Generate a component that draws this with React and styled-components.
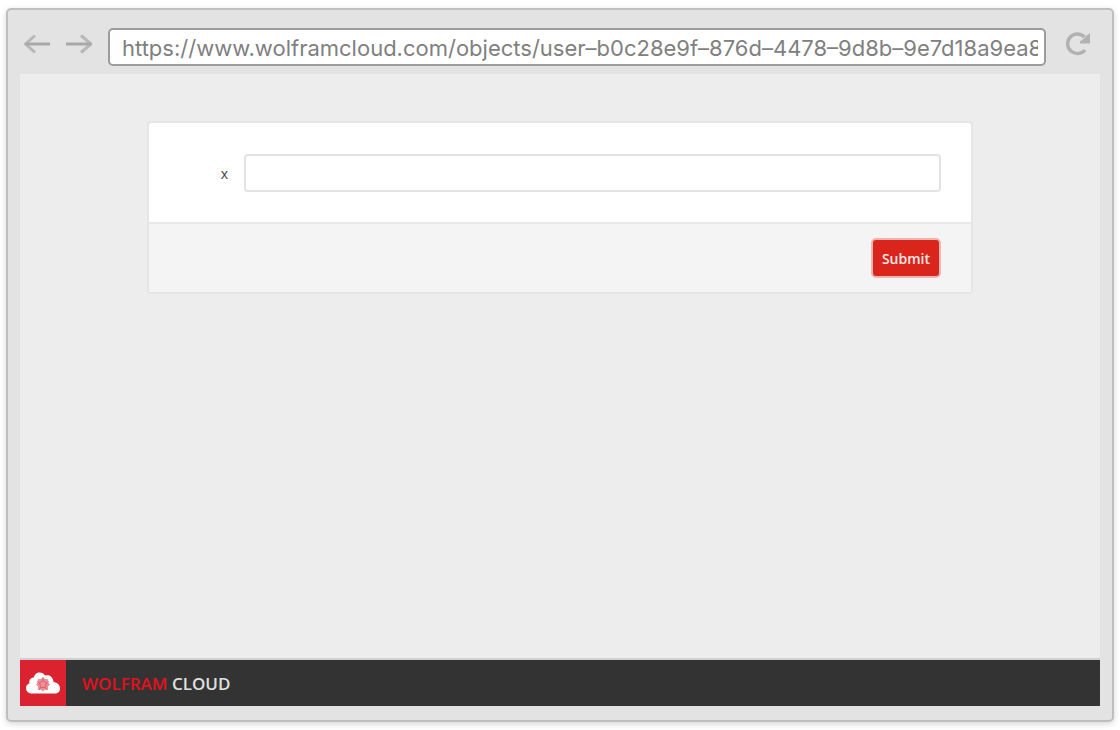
import styled, { createGlobalStyle } from "styled-components"

const address = "https://www.wolframcloud.com/objects/user–b0c28e9f–876d–4478–9d8b–9e7d18a9ea8";

export default function App() {
    return (
        <>
            <GlobalStyle />
            <BrowserWindow>
                <Toolbar>
                    <IconButton type="button" aria-label="Back">
                        <ArrowIcon />
                    </IconButton>
                    <IconButton type="button" aria-label="Forward">
                        <ArrowIcon forward />
                    </IconButton>
                    <AddressInput type="text" aria-label="Address" defaultValue={address} />
                    <IconButton type="button" aria-label="Reload">
                        <ReloadIcon />
                    </IconButton>
                </Toolbar>

                <Page>
                    <Main>
                        <FormCard onSubmit={(e) => e.preventDefault()}>
                            <Field>
                                <FieldLabel htmlFor="x">x</FieldLabel>
                                <FieldInput id="x" type="text" />
                            </Field>
                            <Actions>
                                <SubmitButton type="submit">Submit</SubmitButton>
                            </Actions>
                        </FormCard>
                    </Main>

                    <Footer>
                        <LogoBox>
                            <CloudLogo />
                        </LogoBox>
                        <Brand>
                            <BrandName>WOLFRAM</BrandName> CLOUD
                        </Brand>
                    </Footer>
                </Page>
            </BrowserWindow>
        </>
    )
};

function ArrowIcon({ forward }) {
    return (
        <svg width="28" height="22" viewBox="0 0 28 22" fill="none" strokeWidth="3">
            {forward ? (
                <>
                    <path d="M15 2.500L25 11L15 19.500" stroke="#b8b8b8" strokeLinejoin="round" />
                    <path d="M0 11H25" stroke="#a8a8a8" />
                </>
            ) : (
                <>
                    <path d="M11 2.500L1.500 11L11 19.500" stroke="#b8b8b8" strokeLinejoin="round" />
                    <path d="M1.500 11H26" stroke="#a8a8a8" />
                </>
            )}
        </svg>
    )
}

function ReloadIcon() {
    return (
        <svg width="28" height="28" viewBox="0 0 28 28">
            <path d="M21 20A9.800 9.800 0 1 1 20.500 7" fill="none" stroke="#b2b2b2" strokeWidth="3.4" />
            <path d="M26 3V13.500H16V11.500L20 8.500L22 6Z" fill="#b2b2b2" />
        </svg>
    )
}

function CloudLogo() {
    return (
        <svg width="36" height="24" viewBox="0 0 36 24">
            <path
                d="M7 22.500C3 22.500 1 20 1 17C1 14.500 2.500 12.800 4.500 12.200C3.800 9 5.500 6.500 9 6.500C9.500 3 12 1.500 14.500 1.500C17 1.500 19 2.700 20 4.500C23.500 3.500 28 5 28.500 11C32.500 11.500 35 14 35 17.500C35 20.500 33 22.500 29.500 22.500Z"
                fill="#ffffff"
            />
            <path
                d="M18 6L20 8L23.300 8.200L23 11.300L25 13.500L23 15.500L23.200 18.700L20 18.700L18 20.500L16 18.700L12.800 18.700L13 15.500L11 13.500L13 11.300L12.700 8.200L16 8Z"
                fill="#ea8f97"
            />
            <path
                d="M18 9.500L21.500 12L20.200 16.500H15.800L14.500 12ZM18 9.500V6.500M21.500 12L24 10.500M20.200 16.500L22 19M15.800 16.500L14 19M14.500 12L12 10.500"
                fill="none"
                stroke="#e0606c"
            />
        </svg>
    )
}

const GlobalStyle = createGlobalStyle`
    * {
        box-sizing: border-box;
    }

    body {
        margin: 0;
        background-color: #FFFFFF;
        font-family: "Open Sans", "Noto Sans", sans-serif;
    }
`

const BrowserWindow = styled.div`
    display: flex;
    flex-direction: column;
    min-height: calc(100vh - 16px);
    margin: 8px 6px;
    padding: 0 12px 14px;
    border: 2px solid #BFBFBF;
    border-radius: 5px;
    background-color: #E3E3E3;
    box-shadow: 0 2px 6px rgba(0, 0, 0, 0.16);
`

const Toolbar = styled.header`
    display: flex;
    align-items: flex-start;
    gap: 14px;
    padding: 18px 8px 8px 4px;
`

const IconButton = styled.button`
    display: flex;
    align-items: center;
    justify-content: center;
    height: 32px;
    padding: 0;
    border: none;
    background: none;
    cursor: pointer;
`

const AddressInput = styled.input`
    flex: 1;
    min-width: 0;
    height: 38px;
    margin-right: 4px;
    padding: 2px 6px 0 12px;
    border: 2px solid #9C9C9C;
    border-radius: 5px;
    background-color: #FFFFFF;
    color: #808080;
    font-family: Inter, Roboto, sans-serif;
    font-size: 22px;
`

const Page = styled.div`
    flex: 1;
    display: flex;
    flex-direction: column;
    background-color: #EDEDED;
`

const Main = styled.main`
    flex: 1;
    padding: 47px 127px;
`

const FormCard = styled.form`
    border: 2px solid #E5E5E5;
    border-radius: 4px;
    background-color: #FFFFFF;
`

const Field = styled.div`
    display: flex;
    align-items: center;
    gap: 16px;
    padding: 31px 30px 30px;
`

const FieldLabel = styled.label`
    width: 49px;
    color: #444444;
    font-size: 14px;
    font-weight: 500;
    text-align: right;
`

const FieldInput = styled.input`
    flex: 1;
    min-width: 0;
    height: 38px;
    padding: 0 10px;
    border: 2px solid #E3E3E3;
    border-radius: 4px;
    font-size: 14px;
`

const Actions = styled.div`
    display: flex;
    justify-content: flex-end;
    padding: 14px 30px;
    border-top: 2px solid #E8E8E8;
    background-color: #F4F4F4;
`

const SubmitButton = styled.button`
    height: 40px;
    padding: 0 9px;
    border: 2px solid #EBB5B3;
    border-radius: 5px;
    background-color: #DA251D;
    color: #FFE9E6;
    font-family: "Open Sans", sans-serif;
    font-size: 14px;
    font-weight: 600;
    cursor: pointer;
`

const Footer = styled.footer`
    display: flex;
    align-items: center;
    border-top: 2px solid #CFD0CF;
    background-color: #333333;
`

const LogoBox = styled.div`
    display: flex;
    align-items: center;
    justify-content: center;
    width: 46px;
    height: 46px;
    background-color: #DB222F;
`

const Brand = styled.div`
    padding-left: 16px;
    color: #E0E0E0;
    font-size: 17px;
    font-weight: 600;
`

const BrandName = styled.span`
    color: #E3111D;
`
